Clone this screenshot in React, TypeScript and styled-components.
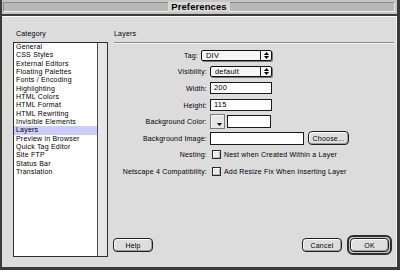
import React from "react"
import styled, { createGlobalStyle } from "styled-components"

const GlobalStyle = createGlobalStyle`
  html, body {
    margin: 0;
    padding: 0;
    background: #fff;
  }
  body {
    font-family: "Liberation Sans", Arial, sans-serif;
    letter-spacing: 0.2px;
    color: #000;
  }
`

const Window = styled.div`
  width: 400px;
  height: 270px;
  box-sizing: border-box;
  display: flex;
  flex-direction: column;
  background: #dcdcdc;
  border-left: 2px solid #3a3a3a;
  border-right: 3px solid #3a3a3a;
  border-bottom: 3px solid #3a3a3a;
  overflow: hidden;
`

const TitleBar = styled.div`
  height: 16px;
  box-sizing: border-box;
  display: flex;
  flex-shrink: 0;
  padding: 2px 2px 2px 1px;
  background: #c6c6c6;
  border-bottom: 2px solid #3a3a3a;
`

const TitleTrack = styled.div`
  flex: 1;
  display: flex;
  justify-content: center;
  align-items: center;
  background: #b8b8b8;
  border: 1px solid;
  border-color: #8a8a8a #ececec #ececec #8a8a8a;
`

const Title = styled.span`
  background: #d8d8d8;
  padding: 0 3px;
  margin: -1px 0;
  font-size: 9.5px;
  font-weight: 700;
  line-height: 10px;
  letter-spacing: 0.1px;
`

const Body = styled.div`
  flex: 1;
  display: grid;
  grid-template-columns: 95px 1fr;
  column-gap: 6px;
  padding: 12px 3px 10px 11px;
  border-top: 1px solid #fff;
  box-shadow: inset -1px 0 0 #f2f2f2;
  min-height: 0;
`

const Column = styled.div`
  display: flex;
  flex-direction: column;
  min-height: 0;
`

const Heading = styled.div`
  font-size: 7px;
  line-height: 9px;
  height: 9px;
  margin-bottom: 4px;
  padding-left: 3px;
`

const ListBox = styled.div`
  flex: 1;
  display: flex;
  background: #fff;
  border: 1px solid #2e2e2e;
`

const Items = styled.div`
  flex: 1;
`

const Item = styled.div<{ $selected?: boolean }>`
  font-size: 7px;
  line-height: 8.35px;
  height: 8.35px;
  padding-left: 2px;
  white-space: nowrap;
  background: ${p => (p.$selected ? "#ccccff" : "transparent")};
`

const ScrollTrack = styled.div`
  width: 9px;
  border-left: 1px solid #4a4a4a;
  background: #e6e6e6;
`

const SectionTitle = styled.div`
  font-size: 7px;
  line-height: 9px;
  height: 9px;
  padding-bottom: 4px;
  border-bottom: 1px solid #8a8a8a;
  box-shadow: 0 1px 0 #f4f4f4;
`

const Form = styled.div`
  padding-top: 4px;
`

const Row = styled.div<{ $label?: number }>`
  display: grid;
  grid-template-columns: ${p => p.$label ?? 93}px auto;
  column-gap: 3px;
  align-items: center;
  height: 16.6px;
`

const Label = styled.span`
  font-size: 7px;
  text-align: right;
  white-space: nowrap;
`

const Controls = styled.div<{ $gap?: number }>`
  display: flex;
  align-items: center;
  gap: ${p => p.$gap ?? 2}px;
`

const Popup = styled.div<{ $w: number }>`
  width: ${p => p.$w}px;
  height: 11px;
  box-sizing: border-box;
  display: flex;
  background: #f6f6f6;
  border: 1px solid #111;
  border-radius: 2px;
  box-shadow: 1px 1px 0 #7a7a7a;
`

const PopupValue = styled.span`
  flex: 1;
  padding-left: 4px;
  font-size: 7.5px;
  line-height: 9px;
`

const PopupArrow = styled.span`
  width: 10px;
  display: flex;
  align-items: center;
  justify-content: center;
  border-left: 1px solid #222;
`

const Field = styled.div<{ $w: number; $h?: number }>`
  width: ${p => p.$w}px;
  height: ${p => p.$h ?? 12}px;
  box-sizing: border-box;
  background: #fff;
  border: 1px solid #1a1a1a;
  padding-left: 3px;
  font-size: 7.5px;
  line-height: ${p => (p.$h ?? 12) - 2}px;
`

const Swatch = styled.div`
  width: 15px;
  height: 15px;
  box-sizing: border-box;
  display: flex;
  align-items: flex-end;
  justify-content: flex-end;
  padding: 0 2px 2px 0;
  background: #e6e6e6;
  border: 1px solid #7a7a7a;
  box-shadow: inset 1px 1px 0 #fafafa;
`

const CheckLine = styled.div`
  display: flex;
  align-items: center;
  gap: 3px;
  padding-left: 2px;
  font-size: 7px;
  white-space: nowrap;
`

const CheckBox = styled.span`
  width: 9px;
  height: 9px;
  box-sizing: border-box;
  background: #ececec;
  border: 1px solid #2a2a2a;
  box-shadow: inset 1px 1px 0 #fff, inset -1px -1px 0 #b4b4b4;
`

const Spacer = styled.div`
  flex: 1;
`

const ButtonRow = styled.div`
  display: flex;
  align-items: center;
  height: 20px;
  margin: 0 2px 2px -1px;
`

const Button = styled.div<{ $w: number }>`
  width: ${p => p.$w}px;
  height: 14px;
  box-sizing: border-box;
  display: flex;
  align-items: center;
  justify-content: center;
  font-size: 7px;
  background: #dedede;
  border: 1px solid #1e1e1e;
  border-radius: 4px;
  box-shadow: inset 1px 1px 0 #fff, inset -1px -1px 0 #9e9e9e;
`

const PushRight = styled.div`
  margin-left: auto;
  display: flex;
  align-items: center;
  gap: 5px;
`

const DefaultRing = styled.div`
  padding: 1px;
  background: #c8c8c8;
  border: 2px solid #2e2e2e;
  border-radius: 6px;
`

const Arrows = () => (
  <svg width="5" height="7" viewBox="0 0 5 7">
    <polygon points="0,3 2.5,0 5,3" fill="#000" />
    <polygon points="0,4 2.5,7 5,4" fill="#000" />
  </svg>
)

const DownTri = () => (
  <svg width="5" height="3" viewBox="0 0 5 3">
    <polygon points="0,0 5,0 2.5,3" fill="#000" />
  </svg>
)

const categories = [
  "General",
  "CSS Styles",
  "External Editors",
  "Floating Palettes",
  "Fonts / Encoding",
  "Highlighting",
  "HTML Colors",
  "HTML Format",
  "HTML Rewriting",
  "Invisible Elements",
  "Layers",
  "Preview in Browser",
  "Quick Tag Editor",
  "Site FTP",
  "Status Bar",
  "Translation",
]

const App = () => (
  <>
    <GlobalStyle />
    <Window>
      <TitleBar>
        <TitleTrack>
          <Title>Preferences</Title>
        </TitleTrack>
      </TitleBar>
      <Body>
        <Column>
          <Heading>Category</Heading>
          <ListBox>
            <Items>
              {categories.map(c => (
                <Item key={c} $selected={c === "Layers"}>
                  {c}
                </Item>
              ))}
            </Items>
            <ScrollTrack />
          </ListBox>
        </Column>
        <Column>
          <SectionTitle>Layers</SectionTitle>
          <Form>
            <Row $label={84}>
              <Label>Tag:</Label>
              <Controls>
                <Popup $w={71}>
                  <PopupValue>DIV</PopupValue>
                  <PopupArrow>
                    <Arrows />
                  </PopupArrow>
                </Popup>
              </Controls>
            </Row>
            <Row>
              <Label>Visibility:</Label>
              <Controls>
                <Popup $w={62}>
                  <PopupValue>default</PopupValue>
                  <PopupArrow>
                    <Arrows />
                  </PopupArrow>
                </Popup>
              </Controls>
            </Row>
            <Row>
              <Label>Width:</Label>
              <Controls>
                <Field $w={62}>200</Field>
              </Controls>
            </Row>
            <Row>
              <Label>Height:</Label>
              <Controls>
                <Field $w={62}>115</Field>
              </Controls>
            </Row>
            <Row>
              <Label>Background Color:</Label>
              <Controls>
                <Swatch>
                  <DownTri />
                </Swatch>
                <Field $w={44} $h={13} />
              </Controls>
            </Row>
            <Row>
              <Label>Background Image:</Label>
              <Controls $gap={4}>
                <Field $w={94} $h={13} />
                <Button $w={41}>Choose...</Button>
              </Controls>
            </Row>
            <Row>
              <Label>Nesting:</Label>
              <CheckLine>
                <CheckBox />
                Nest when Created Within a Layer
              </CheckLine>
            </Row>
            <Row>
              <Label>Netscape 4 Compatibility:</Label>
              <CheckLine>
                <CheckBox />
                Add Resize Fix When Inserting Layer
              </CheckLine>
            </Row>
          </Form>
          <Spacer />
          <ButtonRow>
            <Button $w={40}>Help</Button>
            <PushRight>
              <Button $w={40}>Cancel</Button>
              <DefaultRing>
                <Button $w={39}>OK</Button>
              </DefaultRing>
            </PushRight>
          </ButtonRow>
        </Column>
      </Body>
    </Window>
  </>
)

export default App
